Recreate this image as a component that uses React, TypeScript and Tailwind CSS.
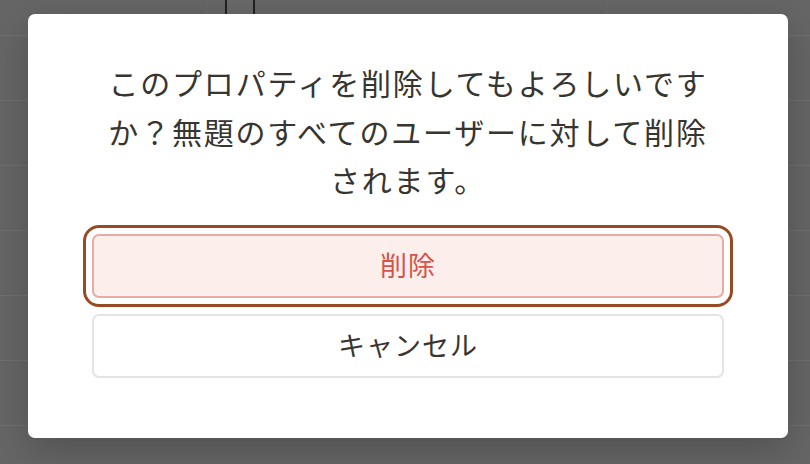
import React from "react";

const rows = [0, 1, 2, 3, 4, 5];

const App = () => {
  return (
    <div
      className="relative h-[464px] w-[810px] overflow-hidden bg-[#666666]"
      style={{ fontFamily: '"Noto Sans CJK JP", "Noto Sans", sans-serif' }}
    >
      {/* page behind the overlay */}
      <div className="flex flex-col">
        <div className="flex h-[36px] border-b border-[#707070]">
          <div className="w-[207px] border-r border-[#6c6c6c]" />
          <div className="w-[18px]" />
          <div className="h-[14px] w-[30px] border-x-2 border-[#222222] bg-[#6a6a6a]" />
          <div className="w-[352px] border-r border-[#6c6c6c]" />
        </div>
        {rows.map((r) => (
          <div key={r} className="h-[65px] border-b border-[#707070]" />
        ))}
      </div>

      {/* dialog */}
      <div className="absolute inset-0 pl-[28px] pt-[14px]">
        <div className="flex w-[760px] flex-col rounded-[7px] bg-white px-16 pb-[60px] pt-[44px] shadow-[0_12px_40px_rgba(0,0,0,0.22)]">
          <p className="px-3 text-center text-[30px] leading-[48.5px] tracking-[1.8px] text-[#37352f]">
            このプロパティを削除してもよろしいですか？無題のすべてのユーザーに対して削除されます。
          </p>
          <button className="mt-[30px] h-16 rounded-[7px] border-2 border-[#e9aba5] bg-[#fbeeeb] text-[27px] tracking-[1px] text-[#d4544c] outline-[3px] outline-offset-[6px] outline-[#984a22] outline-solid">
            削除
          </button>
          <button className="mt-4 h-16 rounded-[7px] border-2 border-[#e4e4e4] bg-white text-[27px] tracking-[1px] text-[#37352f]">
            キャンセル
          </button>
        </div>
      </div>
    </div>
  );
};

export default App;
